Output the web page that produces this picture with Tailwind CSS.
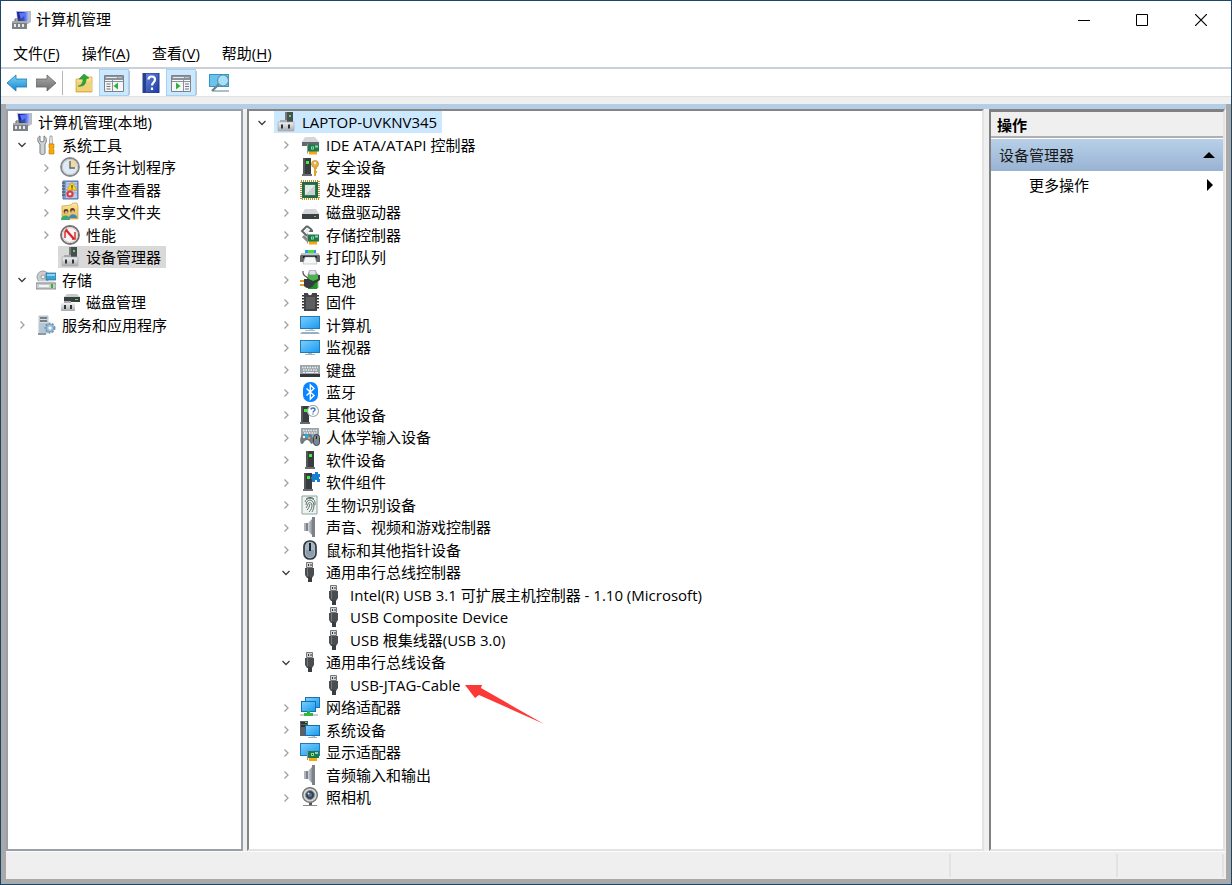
<!DOCTYPE html>
<html lang="zh-CN">
<head>
<meta charset="utf-8">
<meta name="viewport" content="width=device-width, initial-scale=1">
<title>计算机管理</title>
<script src="https://cdn.jsdelivr.net/npm/@tailwindcss/browser@4"></script>
</head>
<body class="h-screen overflow-hidden bg-white font-['Open_Sans','Noto_Sans_CJK_SC',sans-serif] text-[15px] leading-[22px] text-black">

<svg width="0" height="0" class="absolute" aria-hidden="true">
  <defs>
    <linearGradient id="gBlue" x1="0" y1="0" x2="1" y2="1"><stop offset="0" stop-color="#7bcdfd"/><stop offset="1" stop-color="#1b9cf2"/></linearGradient>
    <linearGradient id="gNavy" x1="0" y1="0" x2="1" y2="0"><stop offset="0" stop-color="#0a1a9c"/><stop offset=".5" stop-color="#2540e0"/><stop offset="1" stop-color="#b9c8f8"/></linearGradient>
    <linearGradient id="gGray" x1="0" y1="0" x2="0" y2="1"><stop offset="0" stop-color="#f2f2f2"/><stop offset="1" stop-color="#a6aaae"/></linearGradient>
    <linearGradient id="gSide" x1="0" y1="0" x2="1" y2="0"><stop offset="0" stop-color="#d3d7dc"/><stop offset="1" stop-color="#7c8187"/></linearGradient>
    <linearGradient id="gYel" x1="0" y1="0" x2="0" y2="1"><stop offset="0" stop-color="#fbe9a4"/><stop offset="1" stop-color="#e5b647"/></linearGradient>
    <linearGradient id="gArr" x1="0" y1="0" x2="0" y2="1"><stop offset="0" stop-color="#7fd3f7"/><stop offset="1" stop-color="#1287d0"/></linearGradient>
    <linearGradient id="gArr2" x1="0" y1="0" x2="0" y2="1"><stop offset="0" stop-color="#aaa"/><stop offset="1" stop-color="#6c6c6c"/></linearGradient>
    <linearGradient id="gHelp" x1="0" y1="0" x2="1" y2="1"><stop offset="0" stop-color="#6c8be2"/><stop offset="1" stop-color="#1b39a4"/></linearGradient>

    <symbol id="card" viewBox="0 0 12 11"><path d="M2 7h8v4H2z" fill="#f5a80c"/><path d="M1 1h11v7H1z" fill="#1d7a4c"/><path d="M0 0h1v10H0z" fill="#8e9a92"/><path d="M4 3h3v3H4zM8 2h3v2H8z" fill="#8fd8a6"/><path d="M5 4h1v1H5z" fill="#0a4a28"/></symbol>
    <symbol id="tower" viewBox="0 0 10 18"><path d="M1 0h8v16H1z" fill="#3a3d40"/><path d="M1 0h2v16H1z" fill="#55585b"/><path d="M0 16h10v2H0z" fill="#6a6d70"/><path d="M4 3h3v3H4z" fill="#3df03d"/></symbol>

    <symbol id="mgmt" viewBox="0 0 20 20"><path d="M5 1h15v11l-3 2H7z" fill="#b8bcc0"/><path d="M6 2h12v9H7z" fill="url(#gNavy)"/><path d="M8 3l2 6 3-3 2 4-1-7z" fill="#5c76ee"/><path d="M10 12h5l1 3h-6z" fill="#a4a4a0"/><path d="M1 11h15v8H1z" fill="#7c8185"/><path d="M4 9h8v2H4z" fill="none" stroke="#55595c"/><path d="M1 11h15v2H1z" fill="#a4a9ad"/><path d="M3 14h2v3H3zM7 14h2v3H7zM11 14h2v3h-2z" fill="#e8eaec"/></symbol>
    <symbol id="tools" viewBox="0 0 20 20"><path d="M4 1v5l2 1 2-1V1c3 1 3 6 1 8v9c0 2-5 2-5 0V9C1 7 1 2 4 1z" fill="#cfd2d4" stroke="#777c80"/><path d="M14 1h2l.5 8h-3z" fill="#eee" stroke="#888" stroke-width=".7"/><path d="M13 9h5v4h-1l1 2v4h-5v-4l1-2h-1z" fill="#f6a90a" stroke="#b97508" stroke-width=".6"/></symbol>
    <symbol id="clock" viewBox="0 0 20 20"><circle cx="10" cy="10" r="9" fill="#dce8f2" stroke="#86898c" stroke-width="1.8"/><circle cx="10" cy="10" r="7.6" fill="#e0eaf4" stroke="#c4c8cc"/><path d="M10 3a7 7 0 0 1 7 7h-7z" fill="#f3d99a"/><path d="M10 4v7h5" fill="none" stroke="#5a6570" stroke-width="1.4"/></symbol>
    <symbol id="event" viewBox="0 0 20 20"><path d="M3 1h15v18H3z" fill="#7f9ed0" stroke="#5672a4"/><path d="M6 2h11v16H6z" fill="#b9cce8"/><path d="M6 4h11M6 7h11M6 10h11M6 13h11" stroke="#8eabd6"/><path d="M2 3h3M2 6h3M2 9h3M2 12h3M2 15h3" stroke="#59606c" stroke-width="1.4"/><path d="M12 2l5 8H7z" fill="#ffd51e" stroke="#c89807" stroke-width=".6"/><path d="M12 5v3M12 8.500v1" stroke="#222"/><circle cx="10" cy="14" r="3.600" fill="#e1363f"/><path d="M8.800 12.800l2.400 2.400m0-2.400l-2.400 2.400" stroke="#fff" stroke-width="1.100"/></symbol>
    <symbol id="share" viewBox="0 0 20 20"><path d="M2 4l9-1 2-2h4l1 3v13H2z" fill="url(#gYel)" stroke="#c99d3c" stroke-width=".7"/><circle cx="6" cy="9.500" r="2.400" fill="#5c3f23"/><circle cx="12.500" cy="8.500" r="2.400" fill="#5c3f23"/><circle cx="6.300" cy="10.500" r="1.600" fill="#f0b482"/><circle cx="12.800" cy="9.800" r="1.600" fill="#f0b482"/><path d="M1 18c0-6 9-6 9 0z" fill="#37a977"/><path d="M9 16c0-5 8-5 8 0z" fill="#3c86b8"/></symbol>
    <symbol id="perf" viewBox="0 0 20 20"><circle cx="10" cy="10" r="9" fill="#fff" stroke="#77716e" stroke-width="1.900"/><circle cx="10" cy="10" r="7.400" fill="#f5f5f5" stroke="#d0cccb"/><path d="M5 13V7l2-3M15 7v7h-3" fill="none" stroke="#dc2d33" stroke-width="1.500"/><path d="M6 5l8 9" stroke="#e02027" stroke-width="2.200"/></symbol>
    <symbol id="devmgr" viewBox="0 0 20 20"><path d="M10 0h7v11h-7z" fill="#4a4e52"/><path d="M9 0h2v11H9z" fill="#777b7f"/><path d="M13 3h2v2h-2z" fill="#3df03d"/><path d="M4 8h7v3H4z" fill="#a7abae"/><path d="M2 10h16v9H2z" fill="url(#gGray)" stroke="#aaaeb1" stroke-width=".7"/><path d="M5 12.500h2v4H5zM12 12.500h2v4h-2z" fill="#303336"/></symbol>
    <symbol id="storage" viewBox="0 0 20 20"><circle cx="7" cy="7" r="6" fill="#c9cdd0" stroke="#989da1"/><circle cx="7" cy="7" r="2" fill="#eff1f2" stroke="#999"/><path d="M10 3h10v7H10z" fill="#3da4d4" stroke="#286d92" stroke-width=".7"/><path d="M11 4h8v2h-8z" fill="#8bd5f2"/><path d="M2 11h16l2 3H0z" fill="#e5e7e8"/><path d="M0 13h20v6H0z" fill="#c8ccce" stroke="#757a7d" stroke-width=".8"/><path d="M3 15h10v2H3z" fill="#f2f3f4"/><path d="M15 14h2v4h-2z" fill="#35b52f"/></symbol>
    <symbol id="diskmgr" viewBox="0 0 20 20"><path d="M7 2h10l3 3H4z" fill="#c6cacd"/><path d="M4 5h16v5H4z" fill="#3b3e41"/><path d="M15 7h3v1h-3z" fill="#38e33e"/><path d="M4 9h7v3H4z" fill="#a7abae"/><path d="M1 11h14v8H1z" fill="url(#gGray)"/><path d="M4 13h2v4H4zM10 13h2v4h-2z" fill="#303336"/></symbol>
    <symbol id="services" viewBox="0 0 20 20"><path d="M3 1h9v17H3z" fill="#d7dce0" stroke="#a3abb2" stroke-width=".7"/><path d="M4 3h7M4 6h7" stroke="#56616b" stroke-width="1.300"/><path d="M3 8h9v10H3z" fill="#b5c6d4"/><path d="M2 18h8v2H2z" fill="#8e989f"/><circle cx="14" cy="13" r="4.500" fill="#a8c3dc" stroke="#6f99bd" stroke-width="2" stroke-dasharray="2 1.200"/><circle cx="14" cy="13" r="3.600" fill="#a8c3dc" stroke="#7ba3c5"/><circle cx="14" cy="13" r="1.500" fill="#fff"/></symbol>

    <symbol id="ide" viewBox="0 0 20 20"><path d="M5 2h10l4 5H2z" fill="#d4d7d9"/><path d="M2 7h17v4H2z" fill="#64686b"/><use href="#card" x="7" y="8" width="12" height="12"/></symbol>
    <symbol id="security" viewBox="0 0 20 20"><use href="#tower" x="2" y="1" width="10" height="18"/><circle cx="15" cy="7" r="3.500" fill="#eab64a" stroke="#b98426" stroke-width=".7"/><circle cx="15" cy="6" r="1" fill="#fff"/><path d="M14 10h3v2h-1v2h1v2h-1v3h-2z" fill="#dca63b"/></symbol>
    <symbol id="cpu" viewBox="0 0 20 20"><rect x="1" y="1" width="18" height="18" fill="none" stroke="#b89430" stroke-width="2" stroke-dasharray="1 1"/><path d="M2 2h16v16H2z" fill="#2d7a54"/><path d="M3 3h14v14H3z" fill="none" stroke="#19583a"/><path d="M5 5h10v10H5z" fill="#e6e8e8"/><path d="M15 5v10H5z" fill="#cacfcf"/></symbol>
    <symbol id="disk" viewBox="0 0 20 20"><path d="M5 7h11l3 5H2z" fill="#d3d6d9"/><path d="M2 12h17v5H2z" fill="#3d4043"/><path d="M14 14h2v1h-2z" fill="#37e03c"/></symbol>
    <symbol id="storctl" viewBox="0 0 20 20"><path d="M7 1L2 6l5 5M7 1l5 4M6 6h7" fill="none" stroke="#62676b" stroke-width="2"/><path d="M3 11l5 5" stroke="#888" stroke-width="3"/><path d="M4 6l3-3 3 2-3 4z" fill="#eee"/><use href="#card" x="7" y="8" width="12" height="12"/></symbol>
    <symbol id="printer" viewBox="0 0 20 20"><path d="M5 3h11v4H5z" fill="#1aa3dc"/><path d="M8 3h6v4H8z" fill="#4ed64b"/><path d="M2 6h16l2 3v6H0V9z" fill="#62676b"/><path d="M2 6h16l1 2H1z" fill="#bfc4c8"/><path d="M3 9h14v2H3z" fill="#222"/><path d="M5 10h10l2 7H3z" fill="#f5f6f7" stroke="#9aa0a5" stroke-width=".5"/></symbol>
    <symbol id="battery" viewBox="0 0 20 20"><path d="M9 2h7v2h2v14H8V4h1z" fill="#45bb44" stroke="#70876f" stroke-width=".6"/><path d="M9 1c0-1 7-1 7 0v4H9z" fill="#dcdff0" stroke="#778" stroke-width=".6"/><path d="M8 12h9v7H8z" fill="#19982a"/><path d="M3 1c-1 7 6 4 5 9" fill="none" stroke="#555" stroke-width="1.200"/><path d="M0 11h5M0 15h5" stroke="#e1a22b" stroke-width="1.800"/><path d="M4 9h5c1 1 3 1 4 2l5-2V5h2v5l-6 4c-1 5-8 5-10 2z" fill="#393c3e"/></symbol>
    <symbol id="firmware" viewBox="0 0 20 20"><path d="M4 1h4c0 3 4 3 4 0h5v18H4z" fill="#414345"/><path d="M3 3v15M18 3v15" stroke="#333" stroke-width="2" stroke-dasharray="1.500 1.500"/><path d="M6 5h9v12H6z" fill="#5c5e60"/></symbol>
    <symbol id="computer" viewBox="0 0 20 20"><path d="M0 1h20v13H0z" fill="#247bb4"/><path d="M1 2h18v11H1z" fill="url(#gBlue)"/><path d="M7 14h6v1H5v1h10v-1h-2z" fill="#a9c0d1"/><path d="M2 17h16l2 2H0z" fill="#9caebf"/></symbol>
    <symbol id="monitor" viewBox="0 0 20 20"><path d="M0 3h20v13H0z" fill="#247bb4"/><path d="M1 4h18v11H1z" fill="url(#gBlue)"/><path d="M8 16h4v1h3v1H5v-1h3z" fill="#a3b6c4"/></symbol>
    <symbol id="keyboard" viewBox="0 0 20 20"><path d="M0 5h20v9H0z" fill="#9da5ac"/><path d="M0 14h20v3H0z" fill="#30363c"/><path d="M2 7.500h16M3 10h15" stroke="#e8ebee" stroke-width="1.500" stroke-dasharray="1.500 1"/><path d="M3 12.500h2m1 0h8m1 0h3" stroke="#edf0f2"/></symbol>
    <symbol id="bluetooth" viewBox="0 0 20 20"><rect x="3" width="15" height="20" rx="7" fill="#0a84ff"/><path d="M6.500 6.500l7.500 7-3.700 3.500V3L14 6.500l-7.500 7" fill="none" stroke="#fff" stroke-width="1.400"/></symbol>
    <symbol id="other" viewBox="0 0 20 20"><use href="#tower" x="0" y="1" width="10" height="18"/><circle cx="13" cy="6" r="5.500" fill="#fff" stroke="#a5a9ad" stroke-width="1.200"/><path d="M11 4.500c0-2 4-2 4 0 0 1.500-2 1.500-2 3M13 8.500v1" fill="none" stroke="#2d79bb" stroke-width="1.400"/></symbol>
    <symbol id="hid" viewBox="0 0 20 20"><path d="M1 1h18v8H1z" fill="#9ca5ac"/><path d="M3 3.500h14M4 6h13" stroke="#edf0f2" stroke-width="1.300" stroke-dasharray="1.500 1"/><path d="M3 7h7c4 1 4 9 2 10-2 0-2-4-5-4s-3 4-5 4c-3 0-2-9 1-10z" fill="#707a82"/><circle cx="4" cy="10" r="1.300" fill="#eee"/><circle cx="7" cy="9" r="2" fill="#1eaee8"/><circle cx="9" cy="11" r="1.200" fill="#f0a030"/><rect x="13.500" y="7.500" width="6" height="11" rx="3" fill="#7c8995" stroke="#38424b"/><path d="M16.500 9v3" stroke="#222"/></symbol>
    <symbol id="software" viewBox="0 0 20 20"><use href="#tower" x="5" y="1" width="10" height="18"/></symbol>
    <symbol id="component" viewBox="0 0 20 20"><use href="#tower" x="3" y="1" width="10" height="18"/><path d="M12 2h3V0h3v2h2v3h-1v2h1v3h-3V8h-2v2h-3V7h-1V5h1z" fill="#1680d0"/></symbol>
    <symbol id="finger" viewBox="0 0 20 20"><path d="M2 1h15v18H2z" fill="#edf3f1" stroke="#8aa49c"/><path d="M5 7c1-5 9-5 10 0v3M6 10c0-6 7-7 8 0 0 3-1 5-2 7M6 13c1-1 1-2 2-4 0-2 4-2 4 1s-1 5-3 7M7 15c2-2 2-3 3-6M6 4c2-2 6-2 8 0" fill="none" stroke="#50605a" stroke-width=".9"/></symbol>
    <symbol id="speaker" viewBox="0 0 20 20"><path d="M4 6h4v8H4z" fill="#7c8389"/><path d="M8 6l5-5v18l-5-5z" fill="url(#gSide)"/><path d="M12 0h3v20h-3z" fill="#7c8288"/><path d="M4 6h2v8H4z" fill="#aeb4b9"/></symbol>
    <symbol id="mouse" viewBox="0 0 20 20"><rect x="4" y="1" width="12" height="18" rx="5.500" fill="#a8b6c4" stroke="#303941" stroke-width="1.700"/><path d="M6 10h8v4c0 4-8 4-8 0z" fill="#8b9dac"/><path d="M10 3v8" stroke="#1f252a" stroke-width="2"/></symbol>
    <symbol id="usb" viewBox="0 0 20 20"><path d="M6.500.5h6v5h-6z" fill="#d4d6d8" stroke="#777"/><path d="M8 2h1v2H8zM10.500 2h1v2h-1z" fill="#333"/><path d="M5 6h9v7l-2 3H7l-2-3z" fill="#4b4e51"/><path d="M7 6h1v8H7z" fill="#777a7d"/><path d="M8 15h4v5H8z" fill="#3b3e41"/></symbol>
    <symbol id="network" viewBox="0 0 20 20"><path d="M5 0h15v11H5z" fill="#1775ae"/><path d="M6 1h13v9H6z" fill="url(#gBlue)"/><path d="M1 4h15v11H1z" fill="#166fa6"/><path d="M2 5h13v9H2z" fill="url(#gBlue)"/><path d="M7 14h3v2H7z" fill="#2cab40"/><path d="M0 17h18v2H0z" fill="#c7cdd1"/><path d="M4 16h9v3H4z" fill="#2eb844"/></symbol>
    <symbol id="system" viewBox="0 0 20 20"><path d="M0 1h8v15H0z" fill="#5a6066"/><path d="M1 3h6M1 6h5" stroke="#222" stroke-width="1.400"/><path d="M5 2h2v1H5z" fill="#44e249"/><path d="M5 5h15v11H5z" fill="#176fa7"/><path d="M6 6h13v9H6z" fill="url(#gBlue)"/><path d="M10 16h5v1H8v1h9v-1h-2z" fill="#9fb3c2"/></symbol>
    <symbol id="display" viewBox="0 0 20 20"><path d="M0 1h20v13H0z" fill="#247bb4"/><path d="M1 2h18v11H1z" fill="url(#gBlue)"/><use href="#card" x="7" y="8" width="12" height="11"/></symbol>
    <symbol id="camera" viewBox="0 0 20 20"><path d="M9 14h3v5H9z" fill="#555"/><path d="M3 18h14v1H3z" fill="#888"/><circle cx="10" cy="8" r="7.300" fill="#d5d8da" stroke="#777b7e" stroke-width="1.500"/><circle cx="10" cy="8" r="4.500" fill="#39434b" stroke="#899095"/><circle cx="10" cy="8" r="2" fill="#5475a0"/><circle cx="8.500" cy="6.500" r="1" fill="#dbe9f6"/></symbol>

    <symbol id="back" viewBox="0 0 20 20"><path d="M0 10l9-8v4h11v8H9v4z" fill="url(#gArr)" stroke="#1678b4" stroke-width=".8"/></symbol>
    <symbol id="forward" viewBox="0 0 20 20"><path d="M20 10l-9-8v4H0v8h11v4z" fill="url(#gArr2)" stroke="#666" stroke-width=".8"/></symbol>
    <symbol id="upfolder" viewBox="0 0 20 20"><path d="M2 6h6l2-2h8v15H2z" fill="url(#gYel)" stroke="#d4ab43" stroke-width=".8"/><path d="M3 9h15v9H3z" fill="#f1d27a"/><path d="M4 13c3 0 5-3 5-7H5l5-5 5 4-3 1c0 5-2 8-8 7z" fill="#2ca636" stroke="#188522" stroke-width=".5"/></symbol>
    <symbol id="paneLeft" viewBox="0 0 20 20"><path d="M.5 2.500h19v16H.5z" fill="#f5f6f8" stroke="#7d8289"/><path d="M1 3h18v4H1z" fill="#8d939b"/><path d="M2 4.500h11m1.500 0h1m1 0h1" stroke="#e7eaec"/><path d="M8.500 7v11M1 8.500h18" stroke="#8b9198"/><path d="M2.500 11h4M2.500 13.500h4M2.500 16h4" stroke="#6d737a" stroke-width="1.200"/><path d="M14 9.500v7L9.500 13z" fill="#2fb138"/></symbol>
    <symbol id="paneRight" viewBox="0 0 20 20"><path d="M.5 2.500h19v16H.5z" fill="#f5f6f8" stroke="#7d8289"/><path d="M1 3h18v4H1z" fill="#8d939b"/><path d="M2 4.500h11m1.500 0h1m1 0h1" stroke="#e7eaec"/><path d="M12.500 7v11M1 8.500h18" stroke="#8b9198"/><path d="M14 11h4M14 13.500h4M14 16h4" stroke="#6d737a" stroke-width="1.200"/><path d="M5 9.500v7L9.500 13z" fill="#2fb138"/></symbol>
    <symbol id="help" viewBox="0 0 20 20"><path d="M2 0h16v20H2z" fill="url(#gHelp)" stroke="#233b84"/><path d="M2 0h3v20H2z" fill="#25408e"/><path d="M7.500 6.500c0-4 6.500-4 6.500 0 0 3-3 3-3 6M11 14.500V17" fill="none" stroke="#fff" stroke-width="2.200"/></symbol>
    <symbol id="scan" viewBox="0 0 20 20"><path d="M0 1h20v13H0z" fill="#3594c6"/><path d="M1 2h18v11H1z" fill="#69c4ec"/><path d="M4 17h16v2H4z" fill="#a9bfcd"/><path d="M3 18l7-7" stroke="#72838e" stroke-width="2.400"/><circle cx="14" cy="7.500" r="5.500" fill="#a7e0f7" stroke="#5e93b0" stroke-width="1.200"/></symbol>
  </defs>
</svg>

<div class="flex h-full flex-col border border-[#1c4566]">
  <header class="flex h-[37px] shrink-0 items-center bg-white pl-[10px]">
    <svg class="size-5" aria-hidden="true"><use href="#mgmt"/></svg>
    <h1 class="ml-[5px] flex-1 pb-[2px]">计算机管理</h1>
    <button aria-label="最小化" class="grid h-full w-[58px] place-items-center"><svg class="size-3" viewBox="0 0 12 12"><path d="M0 6.500h12" stroke="#000"/></svg></button>
    <button aria-label="最大化" class="grid h-full w-[58px] place-items-center"><svg class="size-3" viewBox="0 0 12 12"><path d="M.5.5h11v11H.5z" fill="none" stroke="#000"/></svg></button>
    <button aria-label="关闭" class="grid h-full w-[60px] place-items-center"><svg class="size-3" viewBox="0 0 12 12"><path d="M0 0l12 12M12 0L0 12" stroke="#000" stroke-width="1.200"/></svg></button>
  </header>

  <nav aria-label="菜单" class="flex h-[31px] shrink-0 items-center gap-[2px] border-b-2 border-[#c9d0d6] bg-white pl-[2px]">
    <button class="px-[10px]">文件(<u class="underline-offset-2">F</u>)</button>
    <button class="px-[10px]">操作(<u class="underline-offset-2">A</u>)</button>
    <button class="px-[10px]">查看(<u class="underline-offset-2">V</u>)</button>
    <button class="px-[10px]">帮助(<u class="underline-offset-2">H</u>)</button>
  </nav>

  <div role="toolbar" aria-label="工具栏" class="flex h-7 shrink-0 items-center border-b border-[#e2e2e2] bg-white pl-px">
    <button aria-label="后退" class="grid h-full w-[29px] place-items-center"><svg class="size-5"><use href="#back"/></svg></button>
    <button aria-label="前进" class="grid h-full w-[29px] place-items-center"><svg class="size-5"><use href="#forward"/></svg></button>
    <span class="mx-[2px] h-6 w-px bg-[#b4b4b4]"></span>
    <span class="w-[4px]"></span>
    <button aria-label="上一级" class="grid h-full w-[30px] place-items-center"><svg class="size-5"><use href="#upfolder"/></svg></button>
    <button aria-label="显示/隐藏控制台树" class="grid h-full w-[30px] place-items-center border border-[#a5d3f8] bg-[#cce8ff]"><svg class="size-5"><use href="#paneLeft"/></svg></button>
    <span class="h-6 w-px bg-[#c4c4c4]"></span>
    <span class="w-[6px]"></span>
    <button aria-label="帮助" class="grid h-full w-[30px] place-items-center"><svg class="size-5"><use href="#help"/></svg></button>
    <button aria-label="显示/隐藏操作窗格" class="grid h-full w-[30px] place-items-center border border-[#a5d3f8] bg-[#cce8ff]"><svg class="size-5"><use href="#paneRight"/></svg></button>
    <span class="h-6 w-px bg-[#c4c4c4]"></span>
    <span class="w-[7px]"></span>
    <button aria-label="扫描检测硬件改动" class="grid h-full w-[30px] place-items-center"><svg class="size-5"><use href="#scan"/></svg></button>
  </div>
  <div class="h-[7px] shrink-0 bg-[#efefef]"></div>

  <div class="flex min-h-0 flex-1 flex-col border-x-[5px] border-b-[5px] border-[#a9a9a9] bg-[#efefef]">
    <div class="h-[5px] shrink-0 bg-[#b5cee7]"></div>
    <main class="flex min-h-0 flex-1">
      <section aria-label="控制台树" class="w-[237px] shrink-0 overflow-hidden border-2 border-[#9aa0a9] bg-white">
        <ul id="consoleTree" role="tree"></ul>
      </section>
      <section aria-label="设备" class="ml-1 min-w-0 flex-1 overflow-hidden border-2 border-t-[#858585] border-r-[#e3e3e3] border-b-[#e3e3e3] border-l-[#858585] bg-white">
        <ul id="deviceTree" role="tree"></ul>
      </section>
      <aside aria-label="操作" class="mr-px ml-[5px] w-[236px] shrink-0 overflow-hidden border-t-3 border-r-2 border-b-2 border-l-2 border-t-[#808080] border-r-[#e3e3e3] border-b-[#e3e3e3] border-l-[#808080] bg-white">
        <h2 class="h-[26px] border-b-2 border-[#b0b0b0] bg-[#efefef] pt-[2px] pl-[6px] font-bold">操作</h2>
        <button class="mt-px flex h-[32px] w-full items-center justify-between bg-linear-to-b from-[#b8d0e9] to-[#98b3d2] pr-2 pl-2 text-[#1a1a1a]">设备管理器<svg class="h-[6px] w-3" viewBox="0 0 12 6"><path d="M6 0l6 6H0z"/></svg></button>
        <button class="flex h-[28px] w-full items-center justify-between pr-[10px] pl-[38px]">更多操作<svg class="h-3 w-[6px]" viewBox="0 0 6 12"><path d="M0 0l6 6-6 6z"/></svg></button>
      </aside>
    </main>
    <footer class="flex h-[28px] shrink-0 justify-end border-t border-[#fafafa] py-[2px]">
      <div class="w-[167px] border-l-2 border-[#e2e2e2]"></div>
      <div class="w-[108px] border-x-2 border-[#e2e2e2]"></div>
      <div class="w-[2px]"></div>
    </footer>
  </div>
</div>

<script>
// Each row: [depth, state, icon, label, extra]; "leaf" has no expander column, "blank" leaves it empty.
const consoleRows = [
  [0, 'leaf', 'mgmt', '计算机管理(本地)'],
  [0, 'open', 'tools', '系统工具'],
  [1, 'closed', 'clock', '任务计划程序'],
  [1, 'closed', 'event', '事件查看器'],
  [1, 'closed', 'share', '共享文件夹'],
  [1, 'closed', 'perf', '性能'],
  [1, 'blank', 'devmgr', '设备管理器', 'selected'],
  [0, 'open', 'storage', '存储'],
  [1, 'blank', 'diskmgr', '磁盘管理'],
  [0, 'closed', 'services', '服务和应用程序'],
];
const deviceRows = [
  [0, 'open', 'devmgr', 'LAPTOP-UVKNV345', 'active'],
  [1, 'closed', 'ide', 'IDE ATA/ATAPI 控制器'],
  [1, 'closed', 'security', '安全设备'],
  [1, 'closed', 'cpu', '处理器'],
  [1, 'closed', 'disk', '磁盘驱动器'],
  [1, 'closed', 'storctl', '存储控制器'],
  [1, 'closed', 'printer', '打印队列'],
  [1, 'closed', 'battery', '电池'],
  [1, 'closed', 'firmware', '固件'],
  [1, 'closed', 'computer', '计算机'],
  [1, 'closed', 'monitor', '监视器'],
  [1, 'closed', 'keyboard', '键盘'],
  [1, 'closed', 'bluetooth', '蓝牙'],
  [1, 'closed', 'other', '其他设备'],
  [1, 'closed', 'hid', '人体学输入设备'],
  [1, 'closed', 'software', '软件设备'],
  [1, 'closed', 'component', '软件组件'],
  [1, 'closed', 'finger', '生物识别设备'],
  [1, 'closed', 'speaker', '声音、视频和游戏控制器'],
  [1, 'closed', 'mouse', '鼠标和其他指针设备'],
  [1, 'open', 'usb', '通用串行总线控制器'],
  [2, 'blank', 'usb', 'Intel(R) USB 3.1 可扩展主机控制器 - 1.10 (Microsoft)'],
  [2, 'blank', 'usb', 'USB Composite Device'],
  [2, 'blank', 'usb', 'USB 根集线器(USB 3.0)'],
  [1, 'open', 'usb', '通用串行总线设备'],
  [2, 'blank', 'usb', 'USB-JTAG-Cable', 'arrow'],
  [1, 'closed', 'network', '网络适配器'],
  [1, 'closed', 'system', '系统设备'],
  [1, 'closed', 'display', '显示适配器'],
  [1, 'closed', 'speaker', '音频输入和输出'],
  [1, 'closed', 'camera', '照相机'],
];
const indents = {
  consoleTree: ['pl-[2px]', 'pl-[26px]', 'pl-[50px]'],
  deviceTree: ['pl-px', 'pl-[25px]', 'pl-[49px]'],
};
const tint = { selected: 'bg-[#d9d9d9]', active: 'bg-[#cce8ff]' };
const expander = {
  open: '<button aria-label="折叠" class="grid h-full w-6 place-items-center"><svg class="size-[10px]" viewBox="0 0 10 10"><path d="M1.500 3L5 6.500 8.500 3" fill="none" stroke="#404040" stroke-width="1.400"/></svg></button>',
  closed: '<button aria-label="展开" class="grid h-full w-6 place-items-center"><svg class="size-[10px]" viewBox="0 0 10 10"><path d="M3.500 1.500L7 5 3.500 8.500" fill="none" stroke="#a0a0a0" stroke-width="1.300"/></svg></button>',
  blank: '<span class="w-6"></span>',
  leaf: '',
};
const arrow = '<svg class="absolute top-[10px] left-full h-[40px] w-[80px]" viewBox="0 0 80 40" aria-hidden="true"><path d="M0 1l17 0-1 3 63 36-65-29-4 3z" fill="#fb3a38"/></svg>';
function render(id, rows) {
  document.getElementById(id).innerHTML = rows.map(([depth, state, icon, label, extra]) =>
    `<li role="treeitem" aria-level="${depth + 1}" class="flex items-start whitespace-nowrap odd:h-[23px] even:h-[22px] ${indents[id][depth]}">${expander[state]}<span class="relative flex h-[22px] items-center gap-[6px] pr-[5px] pl-[2px] ${tint[extra] || ''}"><svg class="size-5 shrink-0" aria-hidden="true"><use href="#${icon}"/></svg>${label}${extra === 'arrow' ? arrow : ''}</span></li>`).join('');
}
render('consoleTree', consoleRows);
render('deviceTree', deviceRows);
</script>
</body>
</html>
